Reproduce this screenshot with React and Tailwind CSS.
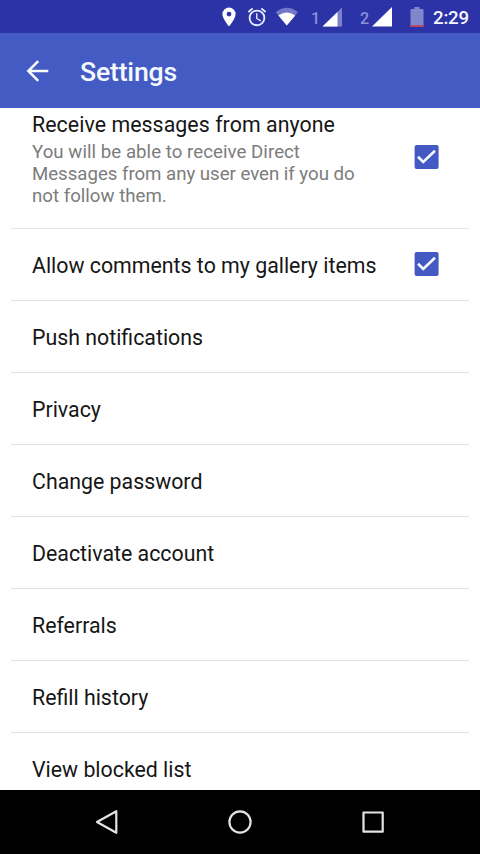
import React from "react";

const items = [
  "Push notifications",
  "Privacy",
  "Change password",
  "Deactivate account",
  "Referrals",
  "Refill history",
  "View blocked list",
];

function CheckBox() {
  return (
    <svg className="h-6 w-[25px] shrink-0" viewBox="0 0 25 24">
      <rect x=".6" width="24" height="24" rx="2" fill="#4459c1" />
      <path d="M4 11.800l5.200 5.100L21 5.800" fill="none" stroke="#f6fbff" strokeWidth="2.600" />
    </svg>
  );
}

function StatusBar() {
  return (
    <div className="flex h-[33px] shrink-0 items-center bg-[#2c33a6] pl-[222px]">
      <svg className="h-5 w-[14px] shrink-0" viewBox="0 0 14 20">
        <path d="M7 .5a6.600 6.600 0 0 0-6.600 6.600C.4 12 7 19.500 7 19.500S13.600 12 13.600 7.100A6.600 6.600 0 0 0 7 .5zm0 4.200a2.400 2.400 0 1 1 0 4.800 2.400 2.400 0 0 1 0-4.800z" fill="#fff" />
      </svg>
      <svg className="ml-[10px] h-[22px] w-[22px] shrink-0" viewBox="0 0 24 24" fill="#e8edff">
        <path d="M22 5.720l-4.600-3.860-1.290 1.530 4.600 3.860L22 5.720zM7.880 3.390L6.600 1.860 2 5.710l1.290 1.530 4.590-3.850zM12.500 8H11v6l4.750 2.850.750-1.230-4-2.370V8zM12 4c-4.970 0-9 4.030-9 9s4.020 9 9 9a9 9 0 0 0 0-18zm0 16c-3.870 0-7-3.130-7-7s3.130-7 7-7 7 3.130 7 7-3.130 7-7 7z" />
      </svg>
      <svg className="ml-[7px] h-[19px] w-6 shrink-0" viewBox="0 0 24 19">
        <path d="M.8 5.300Q12-3.600 22.800 5.300L11.800 18.500z" fill="#7278c8" />
        <path d="M3.400 8.400Q11.800 2.600 20.200 8.400L11.800 18.500z" fill="#fff" />
      </svg>
      <span className="ml-[12px] mt-[4px] w-[9px] text-[16px] font-medium leading-5 text-[#8c91d8]">1</span>
      <svg className="ml-[2px] h-5 w-[21px] shrink-0" viewBox="0 0 21 20">
        <path d="M.5 19.500L20 .5v19z" fill="#7c82cb" />
        <path d="M.5 19.500L15.500 4.900v14.600z" fill="#fff" />
      </svg>
      <span className="ml-[17px] mt-[4px] w-[9px] text-[16px] font-medium leading-5 text-[#8c91d8]">2</span>
      <svg className="ml-[3px] h-5 w-[21px] shrink-0" viewBox="0 0 21 20">
        <path d="M0 19.500L20 0v19.500z" fill="#fff" />
      </svg>
      <svg className="ml-[17px] h-5 w-[14px] shrink-0" viewBox="-.5 0 14 20">
        <path d="M4 0h5v2h3q1 0 1 1v16q0 1-1 1H1q-1 0-1-1V3q0-1 1-1h3z" fill="#8087cd" />
        <path d="M0 18h13v1q0 1-1 1H1q-1 0-1-1z" fill="#b84762" />
      </svg>
      <span className="ml-[9px] mt-[2px] text-[18.67px] font-medium leading-6 tracking-[-0.2px] text-[#f4f8ff]">2:29</span>
    </div>
  );
}

export default function App() {
  return (
    <div className="flex h-[854px] w-[480px] flex-col overflow-hidden bg-white font-['Roboto',sans-serif]">
      <StatusBar />
      <header className="flex h-[75px] shrink-0 items-center bg-[#445bc3] pl-[26px]">
        <svg className="h-[22px] w-[23px] shrink-0" viewBox="0 0 23 22" fill="none" stroke="#f4f8ff" strokeWidth="2.500">
          <path d="M22.300 11H2.200M12.200 1.200L2.300 11l9.900 9.800" />
        </svg>
        <h1 className="ml-[31px] mt-[2px] text-[26.67px] font-medium leading-8 tracking-[-0.2px] text-[#f4f8ff]">Settings</h1>
      </header>
      <main className="flex h-[682px] shrink-0 flex-col overflow-hidden px-[11px] text-[21.33px] text-[#161616]">
        <section className="flex h-[121px] shrink-0 items-start justify-between border-b border-[#e6e6e6] pl-[21px] pr-[30px]">
          <div className="pt-[5px]">
            <h2 className="leading-6 tracking-[0.06px]">Receive messages from anyone</h2>
            <p className="mt-[4px] text-[18.67px] leading-[22px] text-[#7c7c7c]">
              <span className="tracking-[0.04px]">You will be able to receive Direct</span>
              <br />
              <span className="tracking-[-0.03px]">Messages from any user even if you do</span>
              <br />
              not follow them.
            </p>
          </div>
          <div className="pt-[37px]">
            <CheckBox />
          </div>
        </section>
        <section className="flex h-[72px] shrink-0 items-center justify-between border-b border-[#e0e0e0] pl-[21px] pr-[30px]">
          <h2 className="mt-[2px] leading-6">Allow comments to my gallery items</h2>
          <div className="pb-[2px]">
            <CheckBox />
          </div>
        </section>
        {items.map((label) => (
          <section key={label} className="flex h-[72px] shrink-0 items-center border-b border-[#e0e0e0] pl-[21px]">
            <h2 className="mt-[2px] leading-6">{label}</h2>
          </section>
        ))}
      </main>
      <nav className="flex h-16 shrink-0 items-center justify-between bg-black px-[95px]">
        <svg className="h-6 w-6" viewBox="0 0 24 24" fill="none" stroke="#e4e4e4" strokeWidth="2.200" strokeLinejoin="round">
          <path d="M2 12L21.300 1.200v21.600z" />
        </svg>
        <svg className="h-6 w-6" viewBox="0 0 24 24" fill="none" stroke="#e4e4e4" strokeWidth="2.200">
          <circle cx="12" cy="12" r="10.600" />
        </svg>
        <svg className="h-6 w-6" viewBox="0 0 24 24" fill="none" stroke="#e4e4e4" strokeWidth="2.200" strokeLinejoin="round">
          <path d="M2.500 2.500h19.200v19.200H2.500z" />
        </svg>
      </nav>
    </div>
  );
}
